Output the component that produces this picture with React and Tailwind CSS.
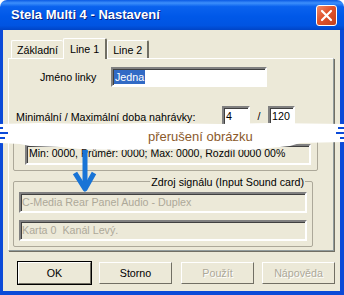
import React from 'react';

function Sunken({ className = '', children }) {
  return (
    <div
      className={`border-2 border-t-[#808080] border-l-[#808080] border-b-white border-r-white shadow-[inset_1px_1px_0_#404040] ${className}`}
    >
      {children}
    </div>
  );
}

function Tab({ label, active, noRight }) {
  return active ? (
    <div className="relative z-10 -mb-px h-[21px] px-[6px] flex items-center bg-[#ece9d8] border-t border-l border-white border-r-2 border-r-[#716f64] rounded-t-[2px]">
      <span className="pt-[1px]">{label}</span>
    </div>
  ) : (
    <div
      className={`h-[18px] px-[5px] flex items-center bg-[#ece9d8] border-t border-l border-white rounded-t-[2px] ${
        noRight ? '' : 'border-r-2 border-r-[#716f64]'
      }`}
    >
      <span className="pt-[2px]">{label}</span>
    </div>
  );
}

function Button({ label, def, disabled, className = '' }) {
  return (
    <div
      className={`w-[75px] h-[24px] flex items-center justify-center bg-[#ece9d8] ${
        def ? 'border border-black' : 'border border-[#ece9d8]'
      } ${className}`}
    >
      <div className="w-full h-full flex items-center justify-center border border-t-white border-l-white border-b-[#716f64] border-r-[#716f64]">
        <span className={disabled ? 'text-[#aca899] [text-shadow:1px_1px_0_white]' : 'text-black'}>{label}</span>
      </div>
    </div>
  );
}

export default function App() {
  return (
    <div className="relative w-[344px] h-[295px] bg-white font-['Liberation_Sans',sans-serif] text-[10.7px] text-black overflow-hidden">
      <div className="flex flex-col h-full">
        {/* title bar */}
        <div className="h-[30px] shrink-0 flex items-center justify-between pl-[11px] pr-[7px] rounded-t-[7px] bg-[linear-gradient(180deg,#0a5ae4_0%,#3d8ffb_10%,#0a62ee_22%,#0058e8_55%,#0054e2_85%,#0044c6_100%)]">
          <span className="text-white font-bold text-[13px] [text-shadow:1px_1px_0_#0a1e7a]">
            Stela Multi 4 - Nastavení
          </span>
          <div className="w-[21px] h-[21px] rounded-[3px] border border-white bg-[linear-gradient(135deg,#f08a68_0%,#e0532c_45%,#c3401c_100%)] flex items-center justify-center">
            <svg width="13" height="13" viewBox="0 0 13 13">
              <path d="M2 2 L11 11 M11 2 L2 11" stroke="white" strokeWidth="2.2" strokeLinecap="round" />
            </svg>
          </div>
        </div>

        {/* body */}
        <div className="flex-1 bg-[#ece9d8] border-l-[3px] border-r-[4px] border-b-[4px] border-[#0b4ad8]">
          <div className="pt-[7px] pl-[5px]">
            <div className="flex items-end pl-[3px] h-[21px]">
              <Tab label="Základní" noRight />
              <Tab label="Line 1" active />
              <Tab label="Line 2" />
            </div>

            {/* tab panel */}
            <div className="w-[326px] h-[193px] border border-white border-r-[#919b9c] border-b-[#919b9c] shadow-[1px_1px_0_#716f64]">
              <div className="flex items-center mt-[8px] h-[20px]">
                <span className="w-[102px] pl-[31px]">Jméno linky</span>
                <Sunken className="w-[156px] h-[20px] bg-white flex items-center pl-[1px]">
                  <span className="bg-[#316ac5] text-white px-[1px] leading-[14px]">Jedna</span>
                </Sunken>
              </div>

              <div className="flex items-center mt-[19px] h-[20px]">
                <span className="w-[213px] pl-[7px] pt-[3px]">Minimální / Maximální doba nahrávky:</span>
                <Sunken className="w-[28px] h-[20px] bg-white pl-[2px] leading-[16px]">4</Sunken>
                <span className="w-[18px] text-center">/</span>
                <Sunken className="w-[27px] h-[20px] bg-white pl-[2px] leading-[16px]">120</Sunken>
              </div>

              {/* stats group */}
              <div className="ml-[4px] mt-[12px] w-[305px] h-[33px] border border-[#aca899] rounded-[2px] pt-[5px] pl-[11px]">
                <Sunken className="w-[286px] h-[21px] bg-[#ece9d8] pl-[2px] pt-[1px] text-[10.5px] leading-[12px]">
                  Min: 0000, Průměr: 0000; Max: 0000, Rozdíl 0000 00%
                </Sunken>
              </div>

              {/* source group */}
              <div className="relative ml-[4px] mt-[10px] w-[300px] h-[66px] border border-[#aca899] rounded-[2px] pt-[10px] pl-[5px]">
                <span className="absolute -top-[8px] right-[7px] px-[1px] bg-[#ece9d8]">
                  Zdroj signálu (Input Sound card)
                </span>
                <Sunken className="w-[288px] h-[21px] pl-[1px] leading-[17px] text-[#aca899]">
                  C-Media Rear Panel Audio - Duplex
                </Sunken>
                <Sunken className="w-[288px] h-[21px] mt-[7px] pl-[1px] leading-[17px] text-[#aca899]">
                  Karta 0&nbsp;&nbsp;Kanál Levý.
                </Sunken>
              </div>
            </div>

            {/* buttons */}
            <div className="flex mt-[10px] ml-[9px]">
              <Button label="OK" def />
              <Button label="Storno" className="ml-[6px]" />
              <Button label="Použít" disabled className="ml-[7px]" />
              <Button label="Nápověda" disabled className="ml-[6px]" />
            </div>
          </div>
        </div>
      </div>

      {/* torn-image band */}
      <svg className="absolute left-0 top-[118px]" width="344" height="36" viewBox="0 0 344 36">
        <path
          d="M0 6 L40 5 L90 6 L150 5 L220 6 L270 5 L344 6 L344 24 L300 25 L290 28 L250 32 L180 31 L120 32 L80 31 L60 29 L30 28 L20 26 L0 25 Z"
          fill="white"
        />
        <rect x="0" y="9" width="3" height="2" fill="#0b4ad8" />
        <rect x="0" y="14" width="8" height="2" fill="#0b4ad8" />
        <rect x="0" y="19" width="5" height="2" fill="#0b4ad8" />
        <rect x="338" y="9" width="6" height="2" fill="#0b4ad8" />
        <rect x="336" y="14" width="8" height="2" fill="#0b4ad8" />
        <rect x="340" y="19" width="4" height="2" fill="#0b4ad8" />
      </svg>
      <span className="absolute left-[148px] top-[129px] text-[13px] leading-[16px] text-[#8b5a2b]">
        přerušení obrázku
      </span>

      {/* arrow */}
      <svg className="absolute left-[70px] top-[150px]" width="28" height="44" viewBox="0 0 28 44">
        <path d="M15 0 L15 38" stroke="#1874d6" strokeWidth="5" />
        <path d="M5 23 L15 39 L24 23" stroke="#1874d6" strokeWidth="5" fill="none" strokeLinejoin="round" />
      </svg>
    </div>
  );
}
